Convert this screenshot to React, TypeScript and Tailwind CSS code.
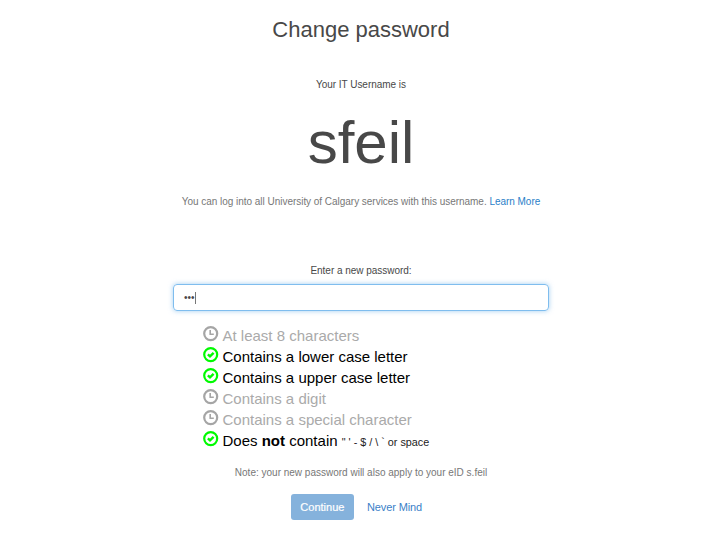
const rules = [
  { ok: false, text: 'At least 8 characters' },
  { ok: true, text: 'Contains a lower case letter' },
  { ok: true, text: 'Contains a upper case letter' },
  { ok: false, text: 'Contains a digit' },
  { ok: false, text: 'Contains a special character' },
];

function StatusIcon({ ok }: { ok: boolean }) {
  return (
    <svg viewBox="0 0 16 16" className={`mt-px h-4 w-4 shrink-0 ${ok ? 'text-[#00fa00]' : 'text-[#a5a5a5]'}`} fill="none" stroke="currentColor">
      <circle cx="7.7" cy="7.6" r="6.5" strokeWidth="2.2" />
      {ok ? <path d="M4.9 7.4 L7 9.4 L10.6 5.9" strokeWidth="2.4" /> : <path d="M7.2 4 V8.2 H10.8" strokeWidth="1.6" />}
    </svg>
  );
}

export default function App() {
  return (
    <main className="flex h-[546px] w-[724px] flex-col items-center overflow-hidden bg-white pr-[2px] font-['Liberation_Sans',Arial,sans-serif] text-[10px] text-[#484848]">
      <h1 className="mt-[17px] text-[22px] leading-[26px]">Change password</h1>
      <p className="mt-[35px] leading-[14px] tracking-[-0.03px]">Your IT Username is</p>
      <p className="mt-[17px] text-[60px] leading-[68px]">sfeil</p>
      <p className="mt-[18px] leading-[14px] tracking-[-0.03px] text-[#777]">
        You can log into all University of Calgary services with this username. <a className="text-[#2a80c8]">Learn More</a>
      </p>
      <label className="mt-[55px] leading-[14px] tracking-[-0.03px]">Enter a new password:</label>
      <div className="mt-[6px] flex h-[27px] w-[376px] items-center rounded-[4px] border border-[#7fbdee] pl-[10px] shadow-[0_0_5px_rgba(102,175,233,0.6)]">
        <span>•••</span><span className="h-3 w-px bg-[#777]" />
      </div>
      <ul className="mt-[14px] w-[316px] text-[15px] leading-[21px]">
        {rules.map((r) => (
          <li key={r.text} className={`flex h-[21px] gap-[3.5px] ${r.ok ? 'text-black' : 'text-[#aaa]'}`}>
            <StatusIcon ok={r.ok} /><span>{r.text}</span>
          </li>
        ))}
        <li className="flex h-[21px] gap-[3.5px] text-black">
          <StatusIcon ok /><span>Does <b>not</b> contain <span className="text-[10.8px] text-[#222]">" ' - $ / \ ` or space</span></span>
        </li>
      </ul>
      <p className="mt-[15px] leading-[14px] text-[#777]">Note: your new password will also apply to your eID s.feil</p>
      <div className="mt-[14px] mr-[9px] flex items-center gap-[13px] text-[11px]">
        <button className="h-[26px] w-[63px] rounded-[3px] bg-[#85b2dc] text-white [-webkit-text-stroke:0.2px_white]">Continue</button>
        <a className="tracking-[-0.1px] text-[#3b7fc8]">Never Mind</a>
      </div>
    </main>
  );
}
